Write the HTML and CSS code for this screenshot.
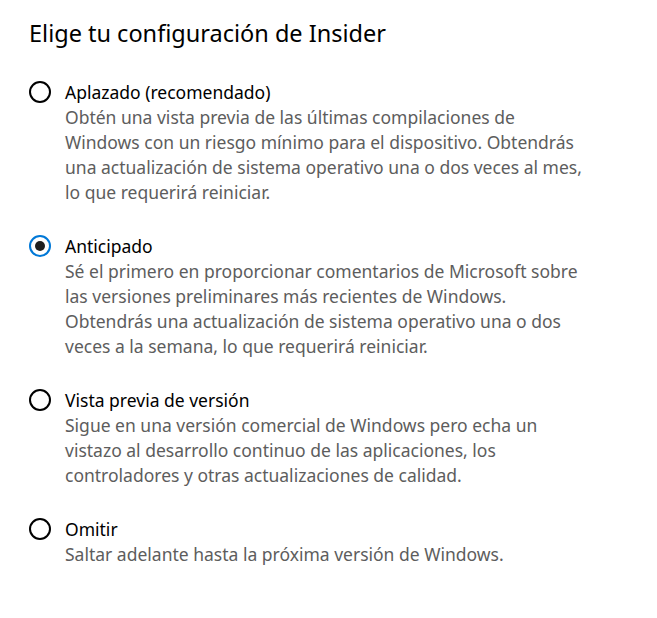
FILE: index.html
```html
<!DOCTYPE html>
<html>

<head>
  <title>Configuración de Insider</title>
  <meta name="viewport" content="initial-scale=1.0">
  <link rel="stylesheet" href="styles.css">
</head>

<body>
  <h1 class="titulo">Elige tu configuración de Insider</h1>
  <form class="opciones" onsubmit="return false;">
    <label class="opcion">
      <input type="radio" name="canal" value="aplazado">
      <span class="marca"></span>
      <span class="texto">
        <span class="nombre">Aplazado (recomendado)</span>
        <span class="desc">Obtén una vista previa de las últimas compilaciones de Windows con un riesgo mínimo para el dispositivo. Obtendrás una actualización de sistema operativo una o dos veces al mes, lo que requerirá reiniciar.</span>
      </span>
    </label>
    <label class="opcion">
      <input type="radio" name="canal" value="anticipado" checked>
      <span class="marca"></span>
      <span class="texto">
        <span class="nombre">Anticipado</span>
        <span class="desc">Sé el primero en proporcionar comentarios de Microsoft sobre las versiones preliminares más recientes de Windows. Obtendrás una actualización de sistema operativo una o dos veces a la semana, lo que requerirá reiniciar.</span>
      </span>
    </label>
    <label class="opcion">
      <input type="radio" name="canal" value="vista">
      <span class="marca"></span>
      <span class="texto">
        <span class="nombre">Vista previa de versión</span>
        <span class="desc">Sigue en una versión comercial de Windows pero echa un vistazo al desarrollo continuo de las aplicaciones, los controladores y otras actualizaciones de calidad.</span>
      </span>
    </label>
    <label class="opcion">
      <input type="radio" name="canal" value="omitir">
      <span class="marca"></span>
      <span class="texto">
        <span class="nombre">Omitir</span>
        <span class="desc">Saltar adelante hasta la próxima versión de Windows.</span>
      </span>
    </label>
  </form>
</body>

</html>
```

FILE: styles.css
```css
body {
  margin: 0;
  padding: 18px 0 0 29px;
  background-color: #ffffff;
  font-family: "Noto Sans", "Open Sans", sans-serif;
  color: #000000;
}

.titulo {
  margin: 0 0 32px 0;
  font-size: 23.5px;
  font-weight: normal;
  line-height: 30px;
}

.opciones {
  display: flex;
  flex-direction: column;
  gap: 29px;
}

.opcion {
  display: flex;
  align-items: flex-start;
  gap: 14px;
  cursor: pointer;
}

.opcion input {
  display: none;
}

.marca {
  box-sizing: border-box;
  flex: none;
  width: 22px;
  height: 22px;
  margin-top: 1px;
  border: 2.6px solid #000000;
  border-radius: 50%;
  display: flex;
  align-items: center;
  justify-content: center;
}

.opcion input:checked+.marca {
  border-color: #0078d7;
}

.opcion input:checked+.marca::after {
  content: "";
  width: 10px;
  height: 10px;
  border-radius: 50%;
  background-color: #1f1f1f;
}

.texto {
  display: flex;
  flex-direction: column;
  width: 525px;
  font-size: 17.5px;
  line-height: 25px;
}

.nombre {
  color: #000000;
}

.desc {
  color: #5d5d5d;
}
```
